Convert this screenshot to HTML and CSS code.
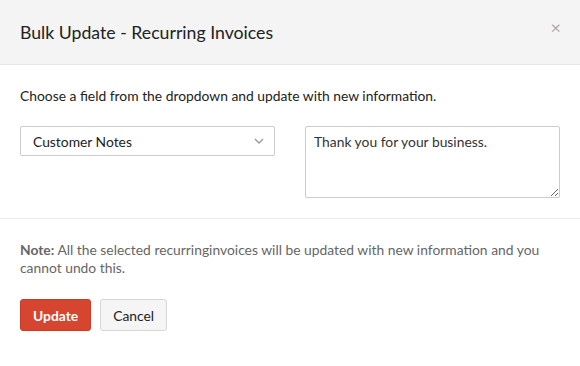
FILE: index.html
```html
<html>
<head>
<link rel="stylesheet" href="styles.css">
</head>
<body>
<div class="modal">
  <div class="modal-header">
    <h4 class="modal-title">Bulk Update - Recurring Invoices</h4>
    <span class="close">&times;</span>
  </div>
  <div class="modal-body">
    <p class="intro">Choose a field from the dropdown and update with new information.</p>
    <div class="fields">
      <div class="select">
        <span>Customer Notes</span>
        <svg class="caret" width="10" height="6" viewBox="0 0 10 6"><path d="M1 1l4 4 4-4" fill="none" stroke="#999" stroke-width="1.4"/></svg>
      </div>
      <textarea class="notes">Thank you for your business.</textarea>
    </div>
  </div>
  <div class="modal-footer">
    <p class="note"><b>Note:</b> All the selected recurringinvoices will be updated with new information and you cannot undo this.</p>
    <div class="actions">
      <button class="btn btn-primary">Update</button>
      <button class="btn btn-default">Cancel</button>
    </div>
  </div>
</div>
</body>
</html>
```
FILE: styles.css
```css
body{
  margin: 0;
  background: #fff;
  font-family: Lato, "Liberation Sans", sans-serif;
  color: #222;
}

.modal-header{
  height: 65px;
  background: #f4f4f4;
  border-bottom: 1px solid #e6e6e6;
  display: flex;
  align-items: center;
  justify-content: space-between;
  padding: 0 20px;
  box-sizing: border-box;
}

.modal-title{
  margin: 0;
  font-size: 17.7px;
  font-weight: normal;
  color: #222;
}

.close{
  font-size: 18px;
  color: #aaa;
  margin-top: -10px;
  margin-right: -1px;
}

.modal-body{
  padding: 22px 20px 20px;
  border-bottom: 1px solid #ebebeb;
}

.intro{
  margin: 0 0 22px;
  font-size: 13.85px;
  line-height: 17px;
  color: #222;
}

.fields{
  display: flex;
  justify-content: space-between;
}

.select{
  width: 255px;
  height: 30px;
  box-sizing: border-box;
  border: 1px solid #ccc;
  border-radius: 2px;
  display: flex;
  align-items: center;
  justify-content: space-between;
  padding: 0 10px 0 12px;
  font-size: 13.85px;
  color: #222;
}

.notes{
  width: 255px;
  height: 72px;
  box-sizing: border-box;
  border: 1px solid #ccc;
  border-radius: 2px;
  padding: 6px 8px;
  font-family: Lato, "Liberation Sans", sans-serif;
  font-size: 13.85px;
  color: #333;
  margin: 0;
  display: block;
}

.modal-footer{
  padding: 22px 20px;
}

.note{
  margin: 0 0 22px;
  font-size: 13.85px;
  line-height: 18px;
  color: #666;
}

.actions{
  display: flex;
  gap: 9px;
}

.btn{
  height: 32px;
  border-radius: 3px;
  font-family: Lato, "Liberation Sans", sans-serif;
  font-size: 13.85px;
  padding: 0 12px;
}

.btn-primary{
  background: #d6452f;
  border: 1px solid #c93d28;
  color: #fff;
  font-weight: bold;
}

.btn-default{
  background: #f5f5f5;
  border: 1px solid #d6d6d6;
  color: #222;
}
```
